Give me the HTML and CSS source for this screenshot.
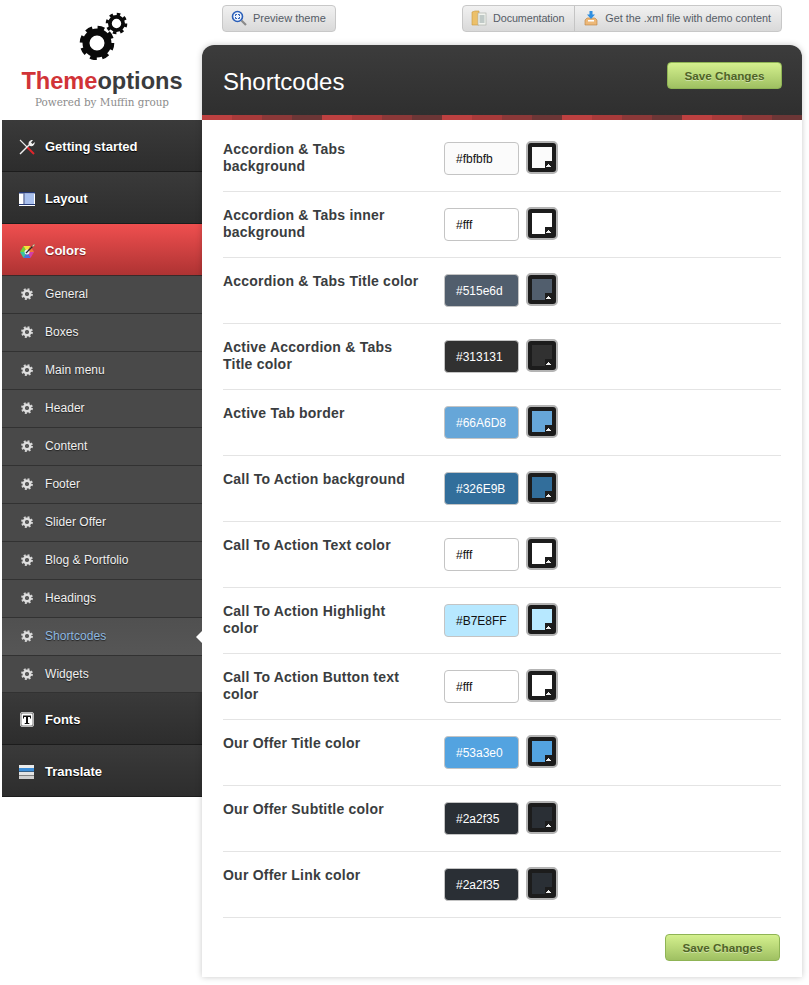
FILE: index.html
```html
<!DOCTYPE html>
<html lang="en">
<head>
<meta charset="utf-8">
<title>Theme options</title>
<link rel="stylesheet" href="styles.css">
</head>
<body>
<svg class="defs" width="0" height="0" aria-hidden="true">
  <symbol id="cog" viewBox="0 0 14 14">
    <circle cx="7" cy="7" r="5.6" fill="none" stroke="#d4d4d4" stroke-width="2.6" stroke-dasharray="2.2 2.2"/>
    <circle cx="7" cy="7" r="3.8" fill="none" stroke="#dedede" stroke-width="2.8"/>
    <circle cx="7" cy="7" r="1.8" fill="#5a5a5a"/>
  </symbol>
</svg>
<div class="page">
  <aside class="sidebar">
    <div class="logo">
      <svg class="gears" width="60" height="52" viewBox="0 0 60 52" aria-hidden="true">
        <g fill="none" stroke="#0a0a0a">
          <circle cx="20" cy="35" r="15" stroke-width="4.6" stroke-dasharray="6.6 5.2"/>
          <circle cx="20" cy="35" r="11" stroke-width="7"/>
          <circle cx="39.500" cy="15.500" r="9.300" stroke-width="3" stroke-dasharray="3.500 3.800"/>
          <circle cx="39.500" cy="15.500" r="6.600" stroke-width="3.800"/>
        </g>
      </svg>
      <div class="brand"><span class="brand-red">Theme</span>options</div>
      <div class="powered">Powered by Muffin group</div>
    </div>
    <nav class="menu">
      <a class="main-item">
        <svg class="ico" width="18" height="18" viewBox="0 0 18 18" aria-hidden="true">
          <path d="M2 2 L9 9" stroke="#e8e8e8" stroke-width="1.100"/>
          <path d="M9 9 L16 16" stroke="#e0262c" stroke-width="2"/>
          <path d="M2 16 L11 7" stroke="#f0f0f0" stroke-width="1.400"/>
          <path d="M11 7.500 C9.500 4.500 12 1.500 15 2 L13 4.500 L14.500 6 L16.800 4 C17 7 14 9.500 11 7.500 Z" fill="#f0f0f0"/>
        </svg>
        Getting started
      </a>
      <a class="main-item">
        <svg class="ico" width="18" height="16" viewBox="0 0 18 16" aria-hidden="true">
          <rect x="1" y="1" width="16" height="14" fill="#fff"/>
          <rect x="1" y="1" width="16" height="1.500" fill="#263a78"/>
          <rect x="6.500" y="2.500" width="9.500" height="10.500" fill="#a9c0ee"/>
          <rect x="5.500" y="2.500" width="1" height="10.500" fill="#263a78"/>
          <rect x="1" y="13" width="16" height="1" fill="#263a78"/>
        </svg>
        Layout
      </a>
      <a class="main-item main-on">
        <svg class="ico" width="18" height="16" viewBox="0 0 18 16" aria-hidden="true">
          <path d="M9 9 L16 9 L12.500 15 Z" fill="#d23fa8"/>
          <path d="M9 9 L12.500 15 L5.500 15 Z" fill="#4a6fe0"/>
          <path d="M9 9 L5.500 15 L2 9 Z" fill="#36c4a0"/>
          <path d="M9 9 L2 9 L5.500 3 Z" fill="#6fd23c"/>
          <path d="M9 9 L5.500 3 L12.500 3 Z" fill="#f5e23a"/>
          <path d="M9 9 L12.500 3 L16 9 Z" fill="#f2763a"/>
          <circle cx="9" cy="9" r="2.500" fill="#eee"/>
          <path d="M8 10 L16.500 1.500" stroke="#2a2a2a" stroke-width="1.200"/>
          <path d="M14.500 3.500 L16.500 1.500" stroke="#e9c9a0" stroke-width="1.200"/>
        </svg>
        Colors
      </a>
      <a class="sub-item"><svg class="cog" width="12" height="12"><use href="#cog"/></svg>General</a>
      <a class="sub-item"><svg class="cog" width="12" height="12"><use href="#cog"/></svg>Boxes</a>
      <a class="sub-item"><svg class="cog" width="12" height="12"><use href="#cog"/></svg>Main menu</a>
      <a class="sub-item"><svg class="cog" width="12" height="12"><use href="#cog"/></svg>Header</a>
      <a class="sub-item"><svg class="cog" width="12" height="12"><use href="#cog"/></svg>Content</a>
      <a class="sub-item"><svg class="cog" width="12" height="12"><use href="#cog"/></svg>Footer</a>
      <a class="sub-item"><svg class="cog" width="12" height="12"><use href="#cog"/></svg>Slider Offer</a>
      <a class="sub-item"><svg class="cog" width="12" height="12"><use href="#cog"/></svg>Blog &amp; Portfolio</a>
      <a class="sub-item"><svg class="cog" width="12" height="12"><use href="#cog"/></svg>Headings</a>
      <a class="sub-item sub-on"><svg class="cog" width="12" height="12"><use href="#cog"/></svg>Shortcodes</a>
      <a class="sub-item sub-last"><svg class="cog" width="12" height="12"><use href="#cog"/></svg>Widgets</a>
      <a class="main-item">
        <svg class="ico" width="18" height="15" viewBox="0 0 18 15" aria-hidden="true">
          <rect x="2" y="0" width="14" height="15" rx="3" fill="#f6f6f6"/>
          <rect x="3" y="1" width="12" height="13" rx="2" fill="#fff" stroke="#222" stroke-width="0.600"/>
          <path d="M5 3.500 H13 V6.500 H12 V5 H10 V11 H11.300 V12 H6.700 V11 H8 V5 H6 V6.500 H5 Z" fill="#111"/>
        </svg>
        Fonts
      </a>
      <a class="main-item">
        <svg class="ico" width="18" height="14" viewBox="0 0 18 14" aria-hidden="true">
          <rect x="1" y="0" width="15" height="3" fill="#ececec"/>
          <rect x="1" y="3" width="15" height="3.500" fill="#3d8ed8"/>
          <rect x="1" y="7" width="15" height="3" fill="#e4e4e4"/>
          <rect x="1" y="10.500" width="15" height="3.500" fill="#cfcfcf"/>
        </svg>
        Translate
      </a>
    </nav>
  </aside>
  <div class="main">
    <div class="toolbar">
      <a class="tool tool-solo">
        <svg class="tool-ico" width="16" height="16" viewBox="0 0 16 16" aria-hidden="true">
          <path d="M10.500 10.500 L15 15" stroke="#8a8a8a" stroke-width="2.200"/>
          <circle cx="6.500" cy="6.500" r="5" fill="#eef3fc" stroke="#2a5fb8" stroke-width="1.600"/>
          <path d="M4.500 6 V4.500 H6 M7 4.500 H8.500 V6 M8.500 7 V8.500 H7 M6 8.500 H4.500 V7" fill="none" stroke="#2a5fb8"/>
        </svg>
        Preview theme
      </a>
      <div class="tool-group">
        <a class="tool tool-docs">
          <svg class="tool-ico" width="16" height="16" viewBox="0 0 16 16" aria-hidden="true">
            <path d="M1 15 V2 L4 1 H8 V15 Z" fill="#ecc06a" stroke="#c9983e" stroke-width="0.600"/>
            <rect x="7" y="3" width="8" height="12" fill="#f1f3ee" stroke="#a6aaa2" stroke-width="0.600"/>
            <path d="M8.500 6 H13.500 M8.500 8 H13.500 M8.500 10 H13.500 M8.500 12 H13.500" stroke="#8fa0a0"/>
          </svg>
          Documentation
        </a>
        <a class="tool">
          <svg class="tool-ico" width="16" height="16" viewBox="0 0 16 16" aria-hidden="true">
            <path d="M2 10 L4 8 H12 L14 10 V15 H2 Z" fill="#edb878" stroke="#b9813f" stroke-width="0.600"/>
            <rect x="5" y="10" width="6" height="1.500" fill="#fff"/>
            <path d="M6.500 1 H9.500 V4.500 H12 L8 9 L4 4.500 H6.500 Z" fill="#2f8fe0"/>
          </svg>
          Get the .xml file with demo content
        </a>
      </div>
    </div>
    <main class="panel">
      <header class="panel-head">
        <h1 class="panel-title">Shortcodes</h1>
        <button class="save" type="button">Save Changes</button>
      </header>
      <div class="stripes"></div>
      <div class="rows">
        <div class="row"><div class="label">Accordion &amp; Tabs background</div><div class="field field-light" style="--c:#fbfbfb">#fbfbfb</div><div class="swatch" style="--c:#fbfbfb"></div></div>
        <div class="row"><div class="label">Accordion &amp; Tabs inner background</div><div class="field field-light" style="--c:#fff">#fff</div><div class="swatch" style="--c:#fff"></div></div>
        <div class="row"><div class="label">Accordion &amp; Tabs Title color</div><div class="field" style="--c:#515e6d">#515e6d</div><div class="swatch" style="--c:#515e6d"></div></div>
        <div class="row"><div class="label">Active Accordion &amp; Tabs Title color</div><div class="field" style="--c:#313131">#313131</div><div class="swatch" style="--c:#313131"></div></div>
        <div class="row"><div class="label">Active Tab border</div><div class="field" style="--c:#66A6D8">#66A6D8</div><div class="swatch" style="--c:#66A6D8"></div></div>
        <div class="row"><div class="label">Call To Action background</div><div class="field" style="--c:#326E9B">#326E9B</div><div class="swatch" style="--c:#326E9B"></div></div>
        <div class="row"><div class="label">Call To Action Text color</div><div class="field field-light" style="--c:#fff">#fff</div><div class="swatch" style="--c:#fff"></div></div>
        <div class="row"><div class="label">Call To Action Highlight color</div><div class="field field-light" style="--c:#B7E8FF">#B7E8FF</div><div class="swatch" style="--c:#B7E8FF"></div></div>
        <div class="row"><div class="label">Call To Action Button text color</div><div class="field field-light" style="--c:#fff">#fff</div><div class="swatch" style="--c:#fff"></div></div>
        <div class="row"><div class="label">Our Offer Title color</div><div class="field" style="--c:#53a3e0">#53a3e0</div><div class="swatch" style="--c:#53a3e0"></div></div>
        <div class="row"><div class="label">Our Offer Subtitle color</div><div class="field" style="--c:#2a2f35">#2a2f35</div><div class="swatch" style="--c:#2a2f35"></div></div>
        <div class="row"><div class="label">Our Offer Link color</div><div class="field" style="--c:#2a2f35">#2a2f35</div><div class="swatch" style="--c:#2a2f35"></div></div>
      </div>
      <footer class="panel-foot">
        <button class="save" type="button">Save Changes</button>
      </footer>
    </main>
  </div>
</div>
</body>
</html>
```
FILE: styles.css
```css
* { box-sizing: border-box; }
html, body { margin: 0; padding: 0; background: #fff; }
body { font-family: "Liberation Sans", Arial, sans-serif; }
.defs { position: absolute; }
.page { display: flex; align-items: flex-start; padding: 0 7px 8px 2px; }

/* sidebar */
.sidebar { width: 200px; flex: none; }
.logo { height: 120px; display: flex; flex-direction: column; align-items: center; }
.gears { margin: 8px 0 0 9px; display: block; flex: none; }
.brand { margin-top: 7px; font-size: 23.6px; line-height: 28px; font-weight: bold; color: #3a3b3d; }
.brand-red { color: #d13337; }
.powered { margin-top: 1px; font-family: "DejaVu Serif", serif; font-size: 10.4px; line-height: 13px; color: #8c8c8c; }

.menu { display: flex; flex-direction: column; }
.main-item { height: 52px; display: flex; align-items: center; padding: 2px 0 0 16px; gap: 9px; background: linear-gradient(#3a3a3a, #2d2d2d); border-bottom: 1px solid #1c1c1c; color: #fff; font-size: 13px; font-weight: bold; text-shadow: 0 1px 1px #000; }
.main-item .ico { flex: none; }
.main-on { background: linear-gradient(#ef4f4f, #ae3333); border-bottom-color: #3a2a2a; text-shadow: 0 1px 1px #7a1f1f; }
.sub-item { position: relative; height: 38px; display: flex; align-items: center; padding: 0 0 2px 19px; gap: 12px; background: #494949; border-bottom: 1px solid #323232; color: #f0f0f0; font-size: 12px; letter-spacing: 0.05px; text-shadow: 0 1px 1px #222; }
.sub-last { height: 37px; padding-bottom: 0; }
.sub-on { background: linear-gradient(#505050, #565656); color: #8fb9e0; }
.sub-on::after { content: ""; position: absolute; right: 0; top: 13px; border: 6px solid transparent; border-left-width: 0; border-right: 6px solid #fff; }

/* toolbar */
.main { flex: 1; min-width: 0; display: flex; flex-direction: column; }
.toolbar { height: 45px; padding: 5px 20px 0; display: flex; justify-content: space-between; align-items: flex-start; }
.tool { height: 27px; display: flex; align-items: center; gap: 6px; padding: 0 10px 1px 8px; font-size: 11px; color: #555c66; white-space: nowrap; }
.tool-ico { flex: none; }
.tool-solo, .tool-group { border: 1px solid #c8c8c8; border-radius: 4px; background: linear-gradient(#f1f1f1, #d9d9d9); }
.tool-group { display: flex; height: 27px; }
.tool-solo { width: 114px; }
.tool-group .tool { height: 25px; font-size: 10.8px; }
.tool-group .tool-docs { border-right: 1px solid #c4c4c4; letter-spacing: -0.1px; }

/* panel */
.panel { background: #fff; border-radius: 12px 12px 0 0; box-shadow: 0 0 6px rgba(0,0,0,.22); }
.panel-head { height: 70px; display: flex; justify-content: space-between; align-items: flex-start; padding: 17px 20px 0 21px; border-radius: 12px 12px 0 0; background: linear-gradient(#3c3c3c, #2f2f2f); }
.panel-title { margin: 5px 0 0; font-size: 24px; line-height: 30px; font-weight: normal; color: #fff; }
.stripes { height: 5px; background: repeating-linear-gradient(90deg, #bc4040 0 30px, #a83a3a 30px 60px, #8b3838 60px 90px, #6c3636 90px 120px); }
.save { width: 115px; height: 27px; padding: 0; border: 1px solid #8fb455; border-radius: 4px; background: linear-gradient(#d4f08e, #9fc062); color: #4f6426; font: bold 11.7px "Liberation Sans", Arial, sans-serif; text-shadow: 0 1px 0 rgba(255,255,255,.4); }

.rows { padding: 6px 21px 0; }
.row { height: 66px; display: grid; grid-template-columns: 200px 103px 32px; padding-top: 15px; border-bottom: 1px solid #e4e4e4; }
.label { font-size: 14px; line-height: 17px; font-weight: bold; color: #3a3d40; letter-spacing: 0.22px; }
.field { width: 75px; height: 33px; margin: 1px 0 0 21px; padding: 1px 0 0 11px; line-height: 31px; border: 1px solid #c4c4c4; border-radius: 4px; font-size: 12px; background: var(--c); color: #fff; }
.field-light { color: #111; }
.swatch { position: relative; width: 32px; height: 33px; border: 2px solid #b4b4b4; border-radius: 5px; background: #1c1c1c; }
.swatch::before { content: ""; position: absolute; inset: 4px; background: var(--c); }
.swatch::after { content: ""; position: absolute; right: 4px; bottom: 4px; width: 7px; height: 7px; background: #1c1c1c conic-gradient(from 135deg at 50% 0, #eee 90deg, #1c1c1c 0) center 3px / 5px 3px no-repeat; }

.panel-foot { height: 59px; display: flex; justify-content: flex-end; padding: 16px 22px 0 0; }
```
